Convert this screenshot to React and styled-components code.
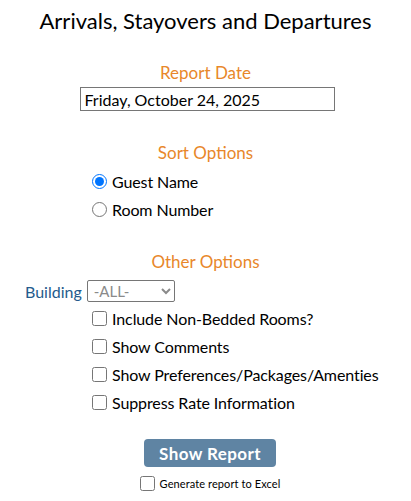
import React from "react";
import styled, { createGlobalStyle } from "styled-components";

const Global = createGlobalStyle`
  html, body { margin: 0; padding: 0; background: #fff; }
  body { font-family: Lato, "Open Sans", sans-serif; color: #000; }
`;

const Page = styled.div`
  width: 411px;
  display: flex;
  flex-direction: column;
  align-items: center;
  padding-top: 7px;
`;

const Title = styled.h1`
  margin: 0;
  font-size: 22px;
  font-weight: 400;
  line-height: 28px;
  text-align: center;
`;

const SectionTitle = styled.h2`
  margin: ${(p) => p.$top}px 0 0;
  font-size: 17px;
  font-weight: 400;
  line-height: 22px;
  color: #e8872a;
  text-align: center;
`;

const DateInput = styled.input`
  box-sizing: border-box;
  width: 255px;
  height: 24px;
  margin: 3px 0 0 3px;
  padding: 0 4px;
  border: 1px solid #767676;
  font-family: Lato, sans-serif;
  font-size: 16px;
  color: #000;
`;

const OptionList = styled.div`
  align-self: stretch;
  display: flex;
  flex-direction: column;
  gap: 6px;
  padding-left: ${(p) => p.$left}px;
  margin-top: ${(p) => p.$top}px;
`;

const OptionRow = styled.label`
  display: flex;
  align-items: center;
  height: 22px;
  font-size: 16px;
  letter-spacing: -0.1px;
  gap: 5px;
`;

const Radio = styled.input.attrs({ type: "radio" })`
  width: 15px;
  height: 15px;
  margin: 0;
  accent-color: #0075ff;
`;

const Check = styled.input.attrs({ type: "checkbox" })`
  width: 15px;
  height: 15px;
  margin: 0;
`;

const BuildingRow = styled.div`
  align-self: stretch;
  display: flex;
  align-items: center;
  gap: 5px;
  padding-left: 25px;
  margin-top: 7px;
`;

const BuildingLabel = styled.label`
  font-size: 16px;
  color: #245b8c;
`;

const Select = styled.select`
  box-sizing: border-box;
  width: 88px;
  height: 22px;
  border: 1px solid #767676;
  border-radius: 2px;
  background: #fff;
  font-family: Lato, sans-serif;
  font-size: 15px;
  color: #8a8a8a;
  padding: 0 2px;
`;

const Button = styled.button`
  box-sizing: border-box;
  width: 132px;
  height: 28px;
  margin: 26px 0 0 9px;
  border: none;
  border-radius: 4px;
  background: #5f84a3;
  color: #fff;
  font-family: Lato, sans-serif;
  font-weight: 700;
  font-size: 17px;
  letter-spacing: 0.4px;
  cursor: pointer;
`;

const ExcelRow = styled.label`
  display: flex;
  align-items: center;
  gap: 5px;
  margin: 9px 0 0 9px;
  font-size: 11px;
  letter-spacing: 0.1px;
`;

export default function App() {
  return (
    <>
      <Global />
      <Page>
        <Title>Arrivals, Stayovers and Departures</Title>
        <SectionTitle $top={27}>Report Date</SectionTitle>
        <DateInput defaultValue="Friday, October 24, 2025" />
        <SectionTitle $top={31}>Sort Options</SectionTitle>
        <OptionList $left={92} $top={6}>
          <OptionRow>
            <Radio name="sort" defaultChecked />
            Guest Name
          </OptionRow>
          <OptionRow>
            <Radio name="sort" />
            Room Number
          </OptionRow>
        </OptionList>
        <SectionTitle $top={31}>Other Options</SectionTitle>
        <BuildingRow>
          <BuildingLabel>Building</BuildingLabel>
          <Select defaultValue="all">
            <option value="all">-ALL-</option>
          </Select>
        </BuildingRow>
        <OptionList $left={92} $top={5}>
          <OptionRow>
            <Check />
            Include Non-Bedded Rooms?
          </OptionRow>
          <OptionRow>
            <Check />
            Show Comments
          </OptionRow>
          <OptionRow>
            <Check />
            Show Preferences/Packages/Amenties
          </OptionRow>
          <OptionRow>
            <Check />
            Suppress Rate Information
          </OptionRow>
        </OptionList>
        <Button>Show Report</Button>
        <ExcelRow>
          <Check />
          Generate report to Excel
        </ExcelRow>
      </Page>
    </>
  );
}
